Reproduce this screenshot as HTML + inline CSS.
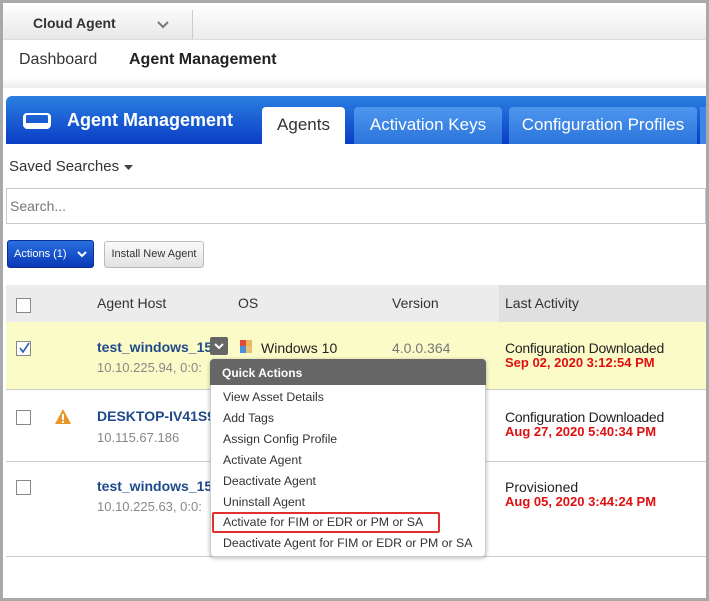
<!DOCTYPE html>
<html><head><style>
*{margin:0;padding:0;box-sizing:border-box}
body{width:709px;height:601px;background:#a9a9a9;font-family:"Liberation Sans",Arial,sans-serif;position:relative;overflow:hidden}
.a{position:absolute;white-space:nowrap}
.cb{position:absolute;width:15px;height:15px;border:1px solid #888;background:#fff}
.mi{position:absolute;left:223px;font-size:12.3px;color:#333}
</style></head><body>
<div class="a" style="left:3px;top:3px;width:703px;height:595px;background:#fff"></div>
<div class="a" style="left:3px;top:3px;width:703px;height:37px;background:linear-gradient(#fff,#ececec);border-bottom:1px solid #ddd"></div>
<div class="a" style="left:5px;top:10px;width:188px;height:29px;background:linear-gradient(#fafafa,#e8e8e8);border-right:1px solid #ccc"></div>
<div class="a" style="left:33px;top:15px;font-size:14px;font-weight:bold;color:#333">Cloud Agent</div>
<svg class="a" style="left:157px;top:21px" width="12" height="8"><path d="M1 1L6 6L11 1" stroke="#777" stroke-width="2" fill="none"/></svg>
<div class="a" style="left:3px;top:78px;width:703px;height:10px;background:linear-gradient(#fff,#ececec)"></div>
<div class="a" style="left:19px;top:51px;font-size:16px;color:#333">Dashboard</div>
<div class="a" style="left:129px;top:51px;font-size:16px;font-weight:bold;color:#222">Agent Management</div>
<div class="a" style="left:6px;top:96px;width:700px;height:48px;background:linear-gradient(#2b7fe0,#0a3dc6);border-radius:6px 0 0 0"></div>
<div class="a" style="left:23px;top:113px;width:28px;height:15px;border:3px solid #fff;border-radius:4px 4px 3px 3px;border-top-width:2px"></div>
<div class="a" style="left:24px;top:123px;width:26px;height:6px;background:#fff;border-radius:0 0 3px 3px"></div>
<div class="a" style="left:67px;top:110px;font-size:18px;font-weight:bold;color:#fff">Agent Management</div>
<div class="a" style="left:262px;top:107px;width:83px;height:37px;background:#fff;border-radius:4px 4px 0 0;font-size:17px;color:#333;text-align:center;line-height:36px">Agents</div>
<div class="a" style="left:354px;top:107px;width:148px;height:37px;background:linear-gradient(#4d96ee,#2c75dc);border-radius:4px 4px 0 0;font-size:17px;color:#fff;text-align:center;line-height:36px">Activation Keys</div>
<div class="a" style="left:509px;top:107px;width:188px;height:37px;background:linear-gradient(#4d96ee,#2c75dc);border-radius:4px 4px 0 0;font-size:17px;color:#fff;text-align:center;line-height:36px">Configuration Profiles</div>
<div class="a" style="left:700px;top:107px;width:6px;height:37px;background:#3f87e6"></div>
<div class="a" style="left:9px;top:158px;font-size:15px;color:#333">Saved Searches</div>
<svg class="a" style="left:124px;top:165px" width="9" height="6"><path d="M0 0H9L4.5 5Z" fill="#444"/></svg>
<div class="a" style="left:6px;top:188px;width:700px;height:36px;border:1px solid #c8c8d0;background:#fff"></div>
<div class="a" style="left:10px;top:198px;font-size:14px;color:#777">Search...</div>
<div class="a" style="left:7px;top:240px;width:87px;height:28px;background:linear-gradient(#2a6fe0,#0838b8);border:1px solid #0a2f90;border-radius:3px"></div>
<div class="a" style="left:14px;top:248px;font-size:11px;line-height:12px;color:#fff">Actions (1)</div>
<svg class="a" style="left:77px;top:251px" width="10" height="7"><path d="M1 1L5 5L9 1" stroke="#fff" stroke-width="2" fill="none"/></svg>
<div class="a" style="left:104px;top:241px;width:100px;height:27px;background:linear-gradient(#fafafa,#e2e2e2);border:1px solid #bbb;border-radius:3px;font-size:11px;color:#333;text-align:center;line-height:25px">Install New Agent</div>
<div class="a" style="left:6px;top:285px;width:700px;height:37px;background:#ececec"></div>
<div class="a" style="left:499px;top:285px;width:207px;height:37px;background:#e0e0e0"></div>
<div class="cb" style="left:16px;top:298px"></div>
<div class="a" style="left:97px;top:295px;font-size:14px;color:#333">Agent Host</div>
<div class="a" style="left:238px;top:295px;font-size:14px;color:#333">OS</div>
<div class="a" style="left:392px;top:295px;font-size:14px;color:#333">Version</div>
<div class="a" style="left:505px;top:295px;font-size:14px;color:#333">Last Activity</div>
<div class="a" style="left:6px;top:322px;width:700px;height:68px;background:#fbfbc8;border-bottom:1px solid #ccc"></div>
<div class="a" style="left:6px;top:461px;width:700px;height:1px;background:#ccc"></div>
<div class="a" style="left:6px;top:556px;width:700px;height:1px;background:#ccc"></div>
<div class="cb" style="left:16px;top:341px"></div>
<svg class="a" style="left:17px;top:341px" width="14" height="14"><path d="M3 7L6 11L12 2" stroke="#2a5db0" stroke-width="1.6" fill="none"/></svg>
<div class="a" style="left:97px;top:339px;font-size:14px;font-weight:bold;color:#1f4a8a">test_windows_15</div>
<div class="a" style="left:210px;top:337px;width:18px;height:18px;background:#666;border-radius:2px"></div>
<svg class="a" style="left:214px;top:343px" width="10" height="7"><path d="M1 1L5 5L9 1" stroke="#fff" stroke-width="2" fill="none"/></svg>
<div class="a" style="left:97px;top:360px;font-size:13px;color:#888">10.10.225.94, 0:0:</div>
<div class="a" style="left:240px;top:340px;width:6px;height:6px;background:#e04a3a"></div><div class="a" style="left:246px;top:340px;width:6px;height:6px;background:#e8b860"></div>
<div class="a" style="left:240px;top:346px;width:6px;height:7px;background:#4a90d8"></div><div class="a" style="left:246px;top:346px;width:6px;height:7px;background:#e8c070"></div>
<div class="a" style="left:261px;top:340px;font-size:14px;color:#222">Windows 10</div>
<div class="a" style="left:392px;top:340px;font-size:14px;color:#777">4.0.0.364</div>
<div class="a" style="left:505px;top:340px;font-size:14px;color:#222;letter-spacing:-0.25px">Configuration Downloaded</div>
<div class="a" style="left:505px;top:355px;font-size:13px;font-weight:bold;color:#e01010">Sep 02, 2020 3:12:54 PM</div>
<div class="cb" style="left:16px;top:410px"></div>
<svg class="a" style="left:54px;top:408px" width="18" height="17"><path d="M9 1L17 16H1Z" fill="#e8962a"/><rect x="8" y="6" width="2" height="6" fill="#fff"/><rect x="8" y="13" width="2" height="2" fill="#fff"/></svg>
<div class="a" style="left:97px;top:408px;font-size:14px;font-weight:bold;color:#1f4a8a">DESKTOP-IV41S9</div>
<div class="a" style="left:97px;top:430px;font-size:13px;color:#888">10.115.67.186</div>
<div class="a" style="left:505px;top:409px;font-size:14px;color:#222;letter-spacing:-0.25px">Configuration Downloaded</div>
<div class="a" style="left:505px;top:424px;font-size:13px;font-weight:bold;color:#e01010">Aug 27, 2020 5:40:34 PM</div>
<div class="cb" style="left:16px;top:480px"></div>
<div class="a" style="left:97px;top:478px;font-size:14px;font-weight:bold;color:#1f4a8a">test_windows_15</div>
<div class="a" style="left:97px;top:499px;font-size:13px;color:#888">10.10.225.63, 0:0:</div>
<div class="a" style="left:505px;top:479px;font-size:14px;color:#222">Provisioned</div>
<div class="a" style="left:505px;top:494px;font-size:13px;font-weight:bold;color:#e01010">Aug 05, 2020 3:44:24 PM</div>
<div class="a" style="left:210px;top:359px;width:276px;height:198px;background:#fff;border:1px solid #ccc;border-radius:4px;box-shadow:0 1px 4px rgba(0,0,0,.3);overflow:hidden"></div>
<div class="a" style="left:210px;top:359px;width:276px;height:26px;background:#666;border-radius:4px 4px 0 0"></div>
<div class="a" style="left:222px;top:366px;font-size:12px;font-weight:bold;color:#fff">Quick Actions</div>
<div class="mi" style="top:390px">View Asset Details</div>
<div class="mi" style="top:411px">Add Tags</div>
<div class="mi" style="top:432px">Assign Config Profile</div>
<div class="mi" style="top:453px">Activate Agent</div>
<div class="mi" style="top:474px">Deactivate Agent</div>
<div class="mi" style="top:495px">Uninstall Agent</div>
<div class="a" style="left:212px;top:512px;width:228px;height:21px;border:2px solid #e03030;border-radius:2px"></div>
<div class="mi" style="top:515px">Activate for FIM or EDR or PM or SA</div>
<div class="mi" style="top:536px">Deactivate Agent for FIM or EDR or PM or SA</div>
</body></html>
